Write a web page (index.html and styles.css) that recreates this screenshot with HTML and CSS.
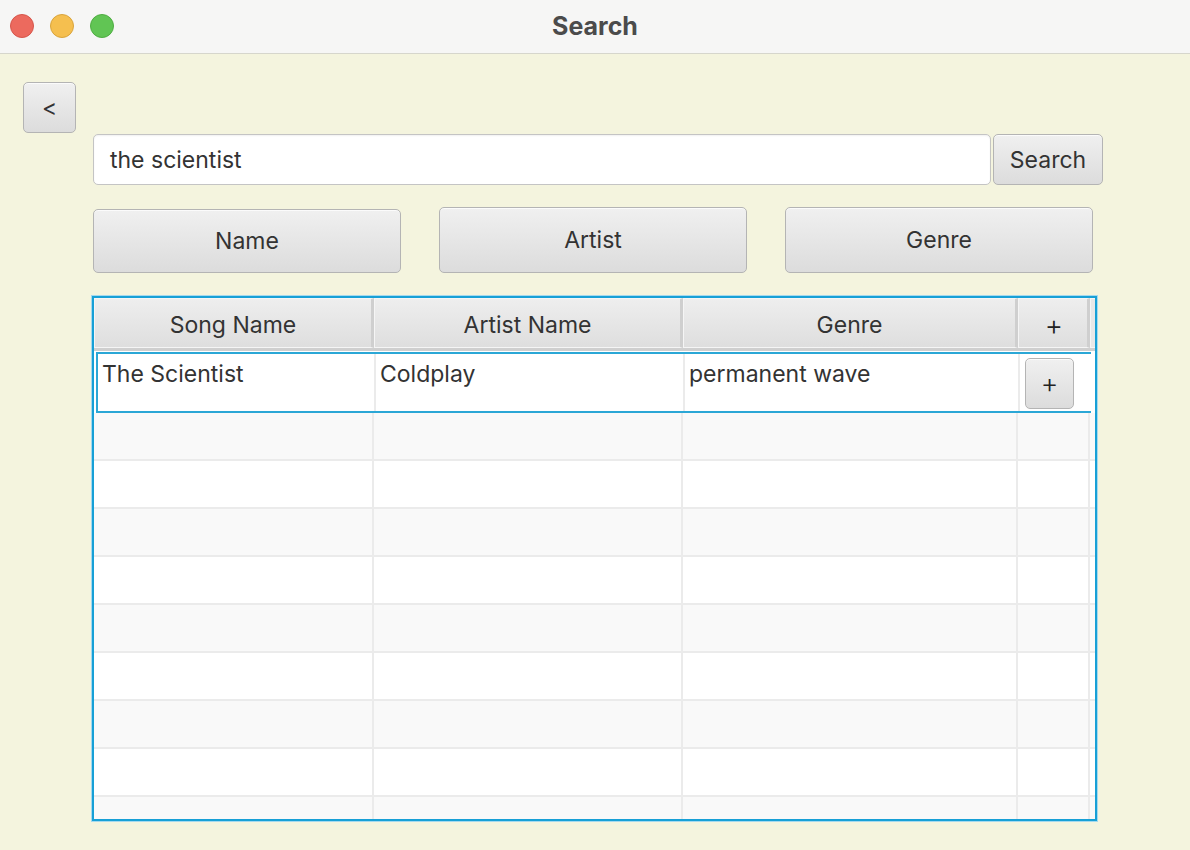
FILE: index.html
```html
<!DOCTYPE html>
<html>
<head>
<meta charset="utf-8">
<title>Search</title>
<link rel="stylesheet" href="styles.css">
</head>
<body>
<div class="window">
  <header class="titlebar">
    <div class="lights">
      <span class="light red"></span>
      <span class="light yellow"></span>
      <span class="light green"></span>
    </div>
    <div class="title">Search</div>
  </header>
  <main class="content">
    <button class="btn back">&lt;</button>
    <div class="search-row">
      <div class="field">the scientist</div>
      <button class="btn search">Search</button>
    </div>
    <div class="filters">
      <button class="btn filter name">Name</button>
      <button class="btn filter">Artist</button>
      <button class="btn filter">Genre</button>
    </div>
    <div class="table">
      <div class="thead">
        <div class="th">Song Name</div>
        <div class="th">Artist Name</div>
        <div class="th">Genre</div>
        <div class="th plus-h">+</div>
        <div class="th filler"></div>
      </div>
      <div class="row selected">
        <div class="td">The Scientist</div>
        <div class="td">Coldplay</div>
        <div class="td">permanent wave</div>
        <div class="td action"><button class="btn plus">+</button></div>
      </div>
      <div class="row odd"><div class="td"></div><div class="td"></div><div class="td"></div><div class="td"></div><div class="td filler"></div></div>
      <div class="row"><div class="td"></div><div class="td"></div><div class="td"></div><div class="td"></div><div class="td filler"></div></div>
      <div class="row odd"><div class="td"></div><div class="td"></div><div class="td"></div><div class="td"></div><div class="td filler"></div></div>
      <div class="row"><div class="td"></div><div class="td"></div><div class="td"></div><div class="td"></div><div class="td filler"></div></div>
      <div class="row odd"><div class="td"></div><div class="td"></div><div class="td"></div><div class="td"></div><div class="td filler"></div></div>
      <div class="row"><div class="td"></div><div class="td"></div><div class="td"></div><div class="td"></div><div class="td filler"></div></div>
      <div class="row odd"><div class="td"></div><div class="td"></div><div class="td"></div><div class="td"></div><div class="td filler"></div></div>
      <div class="row"><div class="td"></div><div class="td"></div><div class="td"></div><div class="td"></div><div class="td filler"></div></div>
      <div class="row odd"><div class="td"></div><div class="td"></div><div class="td"></div><div class="td"></div><div class="td filler"></div></div>
    </div>
  </main>
</div>
</body>
</html>
```

FILE: styles.css
```css
* { box-sizing: border-box; }
html, body {
  margin: 0;
  padding: 0;
  width: 1190px;
  height: 850px;
  overflow: hidden;
  background: #f4f4de;
  font-family: Inter, "Open Sans", "Liberation Sans", sans-serif;
  color: #333;
}
.window { width: 1190px; height: 850px; display: flex; flex-direction: column; }

.titlebar {
  height: 54px;
  flex: none;
  background: #f6f6f5;
  border-bottom: 1px solid #d6d6cc;
  display: flex;
  align-items: center;
  position: relative;
}
.lights { display: flex; gap: 16px; padding-left: 10px; margin-top: -2px; }
.light {
  width: 24px; height: 24px; border-radius: 50%;
  display: block;
}
.red { background: #ec6a5e; border: 1px solid #d6564b; }
.yellow { background: #f5bf4f; border: 1px solid #d9a43c; }
.green { background: #61c554; border: 1px solid #4fad42; }
.title {
  position: absolute;
  left: 0; right: 0; top: 0; bottom: 2px;
  display: flex; align-items: center; justify-content: center;
  font-weight: 700;
  font-size: 25px;
  color: #4b4b4b;
  pointer-events: none;
}

.content {
  flex: 1;
  padding: 28px 0 0 23px;
  display: flex;
  flex-direction: column;
  align-items: flex-start;
}

.btn {
  font-family: inherit;
  font-size: 23px;
  color: #333;
  background: linear-gradient(#f0f0f0, #dcdcdc);
  border: 1px solid #b4b4b4;
  border-radius: 5px;
  box-shadow: inset 0 1px 0 #fbfbfb;
  padding: 0;
  margin: 0;
  display: flex;
  align-items: center;
  justify-content: center;
}

.back { width: 53px; height: 51px; font-size: 23px; }

.search-row {
  margin: 1px 0 0 70px;
  display: flex;
  gap: 2px;
}
.field {
  width: 898px;
  height: 51px;
  background: #fff;
  border: 1px solid #c4c4c4;
  border-radius: 5px;
  box-shadow: inset 0 1px 2px rgba(0,0,0,0.06);
  font-size: 23px;
  padding: 0 0 0 16px;
  display: flex;
  align-items: center;
  color: #333;
}
.search { width: 110px; height: 51px; }

.filters {
  margin: 22px 0 0 70px;
  display: flex;
  gap: 38px;
  align-items: flex-end;
}
.filter { width: 308px; height: 66px; }
.filter.name { height: 64px; }

.table {
  margin: 23px 0 0 69px;
  width: 1005px;
  height: 525px;
  border: 2px solid #17a0d6;
  box-shadow: 0 0 0 1px #a5d9ee;
  background: #fff;
  overflow: hidden;
}
.thead, .row {
  display: grid;
  grid-template-columns: 280px 309px 335px 72px 1fr;
}
.thead {
  height: 53px;
  border-bottom: 3px solid #cfcfcf;
}
.th {
  background: linear-gradient(#eeeeee, #dedede);
  border: 1px solid #f5f5f5;
  border-right: 3px solid #cfcfcf;
  display: flex;
  align-items: center;
  justify-content: center;
  font-size: 23px;
  color: #333;
  padding-top: 3px;
}
.th.plus-h { font-size: 28px; font-weight: 300; padding-left: 2px; color: #222; }
.th.filler { border-right: none; background: #e8e8e8; }
.row {
  height: 48px;
  border-bottom: 2px solid #ebebeb;
  background: #fff;
}
.row.odd { background: #f9f9f9; }
.td {
  border-right: 2px solid #ebebeb;
  font-size: 23px;
  color: #333;
  padding: 8px 0 0 7px;
}
.td.filler { border-right: none; padding: 0; }
.row.selected {
  height: 61px;
  border: 2px solid #2ba7d6;
  border-right: none;
  margin: 1px 4px 0 2px;
  grid-template-columns: 278px 309px 335px 72px;
}
.row.selected .td { padding-top: 6px; padding-left: 4px; }
.row.selected .td.action { padding: 4px 0 0 5px; border-right: none; }
.plus { width: 49px; height: 51px; font-size: 27px; font-weight: 300; color: #222; }
```
